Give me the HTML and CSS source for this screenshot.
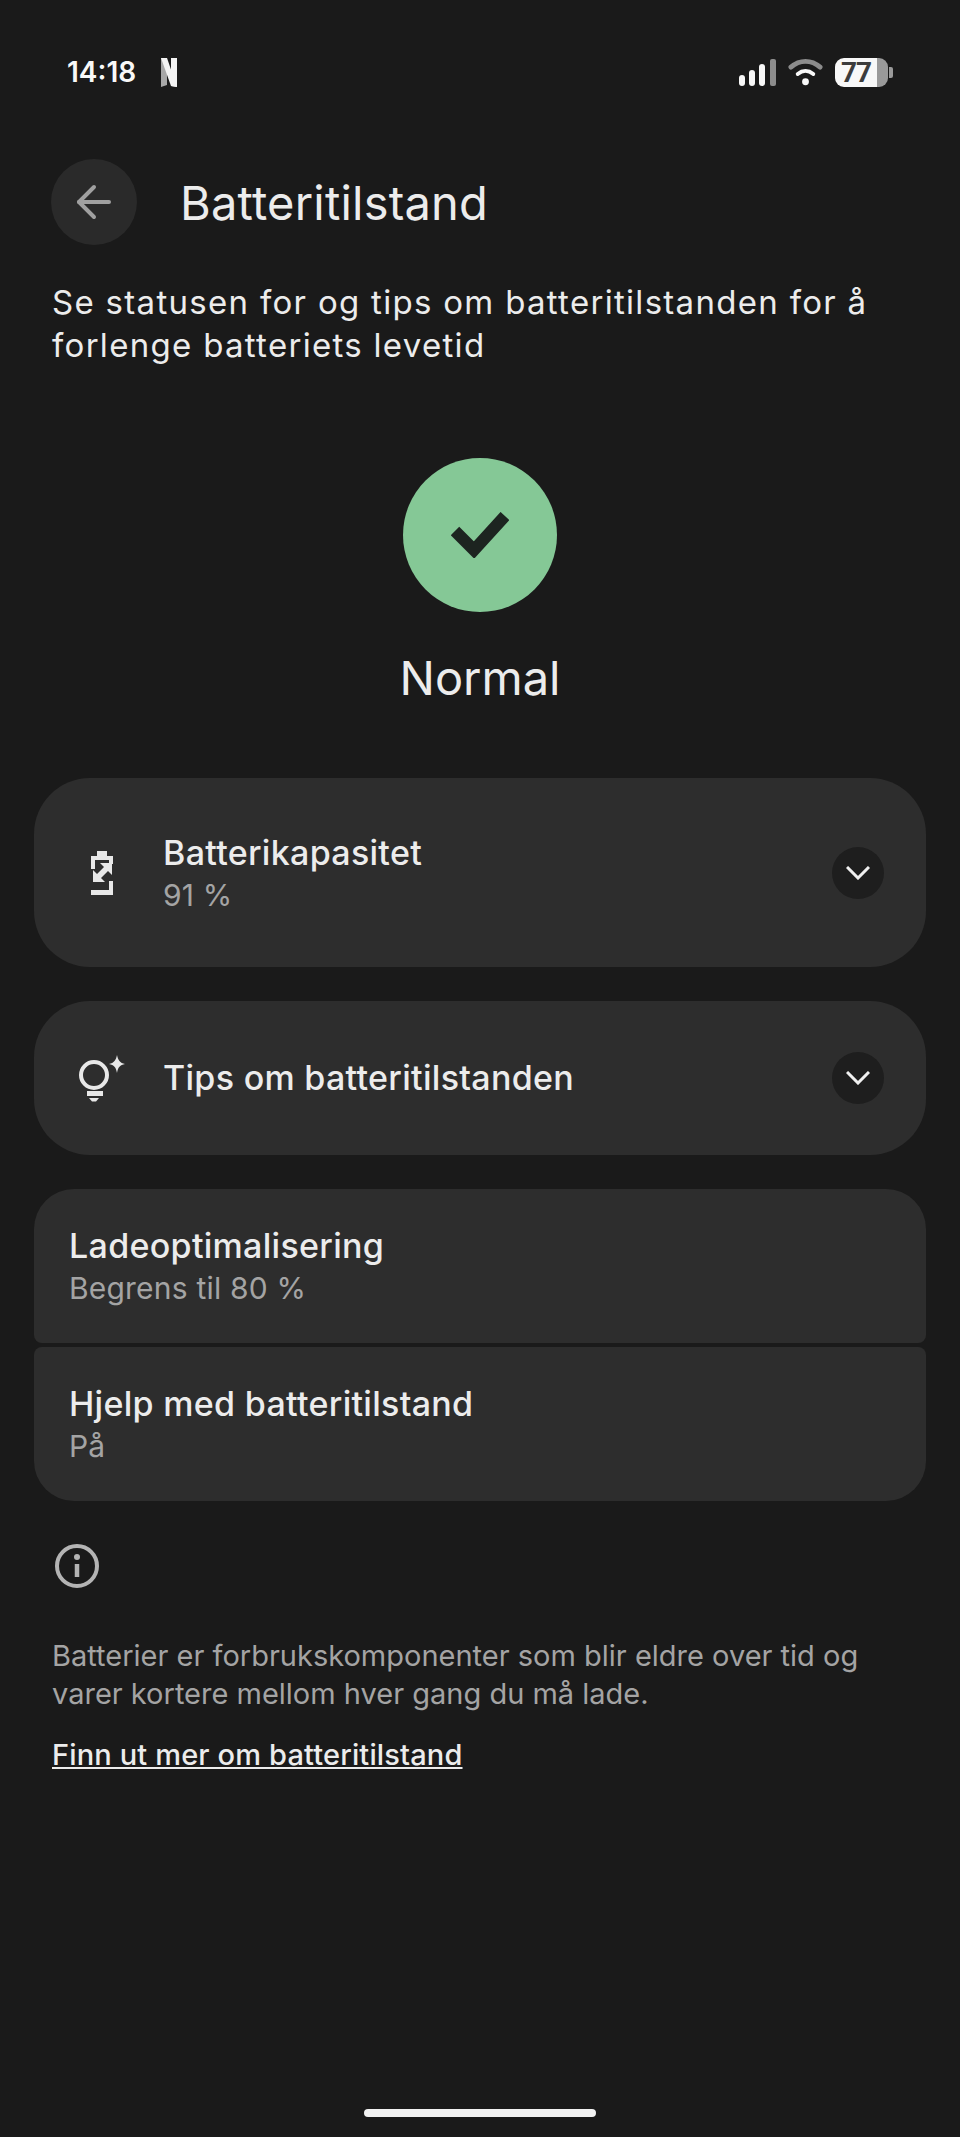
FILE: index.html
```html
<!DOCTYPE html>
<html>
<head>
    <title>Batteritilstand</title>
    <link rel="stylesheet" href="styles.css">
</head>
<body>
    <div class="status-bar">
        <div class="status-left">
            <span class="clock">14:18</span>
            <svg class="netflix" width="16" height="29" viewBox="0 0 16 29">
                <path d="M0 0h6v27l-6 2z" fill="#a8a8a8"/>
                <path d="M10 0h6v29l-6-1z" fill="#f4f4f4"/>
                <path d="M0 0h6l10 29-6-1z" fill="#f4f4f4"/>
            </svg>
        </div>
        <div class="status-right">
            <svg width="37" height="27" viewBox="0 0 37 27">
                <rect x="0" y="16" width="6" height="11" rx="3" fill="#f8f8f8"/>
                <rect x="10" y="11" width="6" height="16" rx="3" fill="#f8f8f8"/>
                <rect x="20" y="5" width="6" height="22" rx="3" fill="#f8f8f8"/>
                <rect x="31" y="0" width="6" height="27" rx="2" fill="#8c8c8c"/>
            </svg>
            <svg width="35" height="28" viewBox="0 0 36 28" fill="none" stroke-linecap="round">
                <path d="M3 9c9-8 21-8 30 0" stroke="#8c8c8c" stroke-width="5"/>
                <path d="M10 16c5-4 11-4 16 0" stroke="#f8f8f8" stroke-width="4"/>
                <circle cx="18" cy="24" r="3.5" fill="#f8f8f8"/>
            </svg>
            <div class="battery">
                <div class="battery-body">77</div>
                <div class="battery-cap"></div>
            </div>
        </div>
    </div>

    <div class="top-bar">
        <div class="back-btn">
            <svg width="36" height="36" viewBox="0 0 36 36" fill="none" stroke="#a0a0a0" stroke-width="4" stroke-linecap="round" stroke-linejoin="round">
                <path d="M33 18H3"/>
                <path d="M18 3L3 18l15 15"/>
            </svg>
        </div>
        <h1 class="page-title">Batteritilstand</h1>
    </div>

    <p class="intro">Se statusen for og tips om batteritilstanden for å forlenge batteriets levetid</p>

    <div class="status-block">
        <div class="status-circle">
            <svg width="58" height="46" viewBox="0 0 58 46" fill="none" stroke="#1d2420" stroke-width="12">
                <path d="M4 19l19 19L54 4"/>
            </svg>
        </div>
        <div class="status-label">Normal</div>
    </div>

    <div class="card card-tall">
        <div class="card-icon">
            <svg width="22" height="44" viewBox="0 0 22 44" fill="#e8e8e8">
                <path d="M6 0h10v5h6v8h-4V9H4v9H0V5h6z"/>
                <path d="M0 39h18v-9h4v14H0z"/>
                <path d="M9 12h12v12l-4-4-7 7 4 4H2V19l4 4 7-7z"/>
            </svg>
        </div>
        <div class="card-text">
            <div class="card-title">Batterikapasitet</div>
            <div class="card-sub">91 %</div>
        </div>
        <div class="chevron-btn">
            <svg width="24" height="14" viewBox="0 0 24 14" fill="none" stroke="#f0f0f0" stroke-width="3">
                <path d="M1 1l11 11L23 1"/>
            </svg>
        </div>
    </div>

    <div class="card card-short">
        <div class="card-icon">
            <svg width="48" height="48" viewBox="0 0 48 48" fill="none" stroke="#e8e8e8" stroke-width="4">
                <circle cx="16" cy="21" r="13"/>
                <path d="M9 37h16v5H9z" fill="#e8e8e8" stroke="none"/>
                <path d="M11 44h10l-3 3.5h-4z" fill="#e8e8e8" stroke="none"/>
                <path d="M39 1c1 5 3 8 8 9-5 1-7 3-8 9-1-6-3-8-8-9 5-1 7-4 8-9z" fill="#e8e8e8" stroke="none"/>
            </svg>
        </div>
        <div class="card-text">
            <div class="card-title">Tips om batteritilstanden</div>
        </div>
        <div class="chevron-btn">
            <svg width="24" height="14" viewBox="0 0 24 14" fill="none" stroke="#f0f0f0" stroke-width="3">
                <path d="M1 1l11 11L23 1"/>
            </svg>
        </div>
    </div>

    <div class="group">
        <div class="group-item group-top">
            <div class="card-title">Ladeoptimalisering</div>
            <div class="card-sub">Begrens til 80 %</div>
        </div>
        <div class="group-item group-bottom">
            <div class="card-title">Hjelp med batteritilstand</div>
            <div class="card-sub">På</div>
        </div>
    </div>

    <div class="info-icon">
        <svg width="44" height="44" viewBox="0 0 44 44" fill="none" stroke="#b4b4b4" stroke-width="4">
            <circle cx="22" cy="22" r="20"/>
            <path d="M22 20v13" stroke-width="4.5"/>
            <circle cx="22" cy="13" r="3" fill="#b4b4b4" stroke="none"/>
        </svg>
    </div>

    <p class="footnote">Batterier er forbrukskomponenter som blir eldre over tid og varer kortere mellom hver gang du må lade.</p>
    <a class="learn-more" href="#">Finn ut mer om batteritilstand</a>

    <div class="home-bar"></div>
</body>
</html>
```

FILE: styles.css
```css
* {
    box-sizing: border-box;
}
body {
    margin: 0;
    width: 960px;
    height: 2137px;
    background-color: #1a1a1a;
    color: #ececec;
    font-family: "Inter", "Open Sans", sans-serif;
    position: relative;
    overflow: hidden;
}

.status-bar {
    display: flex;
    justify-content: space-between;
    align-items: center;
    height: 30px;
    margin-top: 57px;
    padding: 0 67px;
}
.status-left {
    display: flex;
    align-items: center;
    gap: 25px;
}
.clock {
    font-size: 28px;
    font-weight: 600;
    color: #f8f8f8;
}
.status-right {
    display: flex;
    align-items: center;
    gap: 12px;
}
.battery {
    display: flex;
    align-items: center;
    gap: 1px;
}
.battery-body {
    width: 53px;
    height: 29px;
    padding-right: 11px;
    border-radius: 9px;
    background: linear-gradient(90deg, #f8f8f8 42px, #9a9a9a 42px);
    color: #3c3c3c;
    font-family: "Roboto", sans-serif;
    font-size: 28px;
    font-weight: 700;
    line-height: 29px;
    letter-spacing: -1px;
    text-align: center;
}
.battery-cap {
    width: 4px;
    height: 11px;
    border-radius: 0 2px 2px 0;
    background-color: #9a9a9a;
}

.top-bar {
    display: flex;
    align-items: center;
    gap: 43px;
    margin-top: 72px;
    padding-left: 51px;
}
.back-btn {
    width: 86px;
    height: 86px;
    border-radius: 50%;
    background-color: #2a2a2a;
    display: flex;
    align-items: center;
    justify-content: center;
}
.page-title {
    margin: 0;
    font-size: 47px;
    font-weight: 400;
    letter-spacing: 0.2px;
}

.intro {
    margin: 36px 0 0;
    padding: 0 52px;
    font-size: 33px;
    line-height: 43px;
    letter-spacing: 1.3px;
}

.status-block {
    margin-top: 91px;
    display: flex;
    flex-direction: column;
    align-items: center;
}
.status-circle {
    width: 154px;
    height: 154px;
    border-radius: 50%;
    background-color: #85c896;
    display: flex;
    align-items: center;
    justify-content: center;
}
.status-label {
    margin-top: 36px;
    font-size: 47px;
    line-height: 60px;
}

.card {
    display: flex;
    align-items: center;
    margin: 0 34px;
    background-color: #2d2d2d;
    border-radius: 56px;
    padding: 0 42px 0 44px;
}
.card-tall {
    height: 189px;
    margin-top: 70px;
}
.card-short {
    height: 154px;
    margin-top: 34px;
}
.card-icon {
    width: 48px;
    display: flex;
    justify-content: center;
    margin-right: 37px;
}
.card-text {
    flex: 1;
}
.card-title {
    font-size: 34px;
    font-weight: 500;
    line-height: 44px;
    letter-spacing: 0.3px;
}
.card-sub {
    font-size: 30px;
    line-height: 40px;
    letter-spacing: 0.2px;
    color: #a4a4a4;
}
.chevron-btn {
    width: 52px;
    height: 52px;
    border-radius: 50%;
    background-color: #1e1e1e;
    display: flex;
    align-items: center;
    justify-content: center;
}

.group {
    margin: 34px 34px 0;
    display: flex;
    flex-direction: column;
    gap: 4px;
}
.group-item {
    height: 154px;
    padding: 35px 35px 0;
    background-color: #2d2d2d;
}
.group-top {
    border-radius: 40px 40px 8px 8px;
}
.group-bottom {
    border-radius: 8px 8px 40px 40px;
}

.info-icon {
    margin: 43px 0 0 55px;
    height: 44px;
}
.footnote {
    margin: 49px 0 0;
    padding: 0 52px;
    font-size: 29px;
    line-height: 38px;
    color: #a4a4a4;
}
.learn-more {
    display: inline-block;
    margin: 23px 0 0 52px;
    font-size: 29px;
    font-weight: 500;
    line-height: 38px;
    letter-spacing: 0.15px;
    color: #ececec;
}

.home-bar {
    position: absolute;
    left: 364px;
    top: 2109px;
    width: 232px;
    height: 8px;
    border-radius: 4px;
    background-color: #f2f2f2;
}
```
